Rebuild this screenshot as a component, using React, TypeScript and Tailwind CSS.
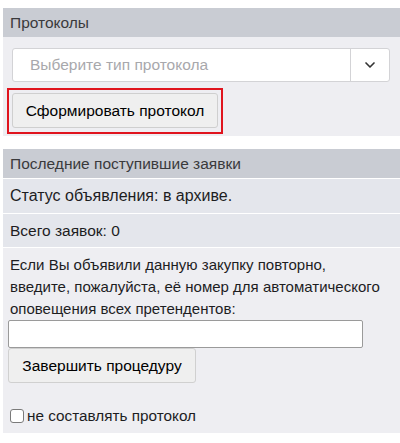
import { ChevronDown } from 'lucide-react';

export default function App() {
  return (
    <div className="w-[400px] h-[443px] bg-white pt-2 pl-[3px] text-[16px] text-[#1d1d1f]" style={{ fontFamily: '"Liberation Sans", Arial, sans-serif' }}>
      {/* Протоколы */}
      <div className="h-[29px] bg-[#c9ccd3] px-[7px] flex items-center text-[15.5px] text-[#3a3a3c]">Протоколы</div>
      <div className="bg-[#eeeef2] pt-[11px] pb-[2px]">
        <div className="ml-[9px] w-[378px] h-[34px] bg-white border border-[#d3d3d6] rounded-[3px] flex">
          <div className="flex-1 flex items-center pl-[17px] text-[15.5px] text-[#a8a8ac]">Выберите тип протокола</div>
          <div className="w-[39px] border-l border-[#d3d3d6] flex items-center justify-center">
            <ChevronDown className="w-4 h-4 text-[#333]" strokeWidth={2.5} />
          </div>
        </div>
        <div className="ml-[4px] mt-[6px] inline-block border-2 border-[#e0141e] p-[3px] pb-[4px]">
          <button className="h-[35px] w-[206px] bg-[#efefef] border border-[#cfcfcf] rounded-[3px] text-[15.5px] text-black">
            Сформировать протокол
          </button>
        </div>
      </div>

      {/* Последние поступившие заявки */}
      <div className="mt-[13px] h-[29px] bg-[#c9ccd3] px-[7px] flex items-center text-[15.5px] text-[#3a3a3c]">Последние поступившие заявки</div>
      <div className="bg-[#e4e6ec] h-[35px] flex items-center px-[7px] border-t border-white text-[16px]">Статус объявления: в архиве.</div>
      <div className="bg-[#e4e6ec] h-[34px] flex items-center px-[7px] border-t border-white text-[15.5px]">Всего заявок: 0</div>
      <div className="bg-[#eeeef2] pl-[5px] pt-[6px] pb-[6px] border-t border-white">
        <p className="leading-[22px] pl-[2px] text-[15px] whitespace-nowrap">
          Если Вы объявили данную закупку повторно,
          <br />
          введите, пожалуйста, её номер для автоматического
          <br />
          оповещения всех претендентов:
        </p>
        <input type="text" className="block w-[355px] h-[28px] bg-white border border-[#9a9a9a] rounded-[2px]" />
        <button className="block h-[35px] w-[188px] bg-[#efefef] border border-[#d0d0d0] rounded-[3px] text-[15.5px] text-black">
          Завершить процедуру
        </button>
        <label className="flex items-center gap-[3px] mt-[22px] leading-[22px] text-[15.3px]">
          <span className="ml-[2px] w-[14px] h-[14px] border border-[#7a7a7a] rounded-[3px] bg-white" />
          не составлять протокол
        </label>
      </div>
    </div>
  );
}
